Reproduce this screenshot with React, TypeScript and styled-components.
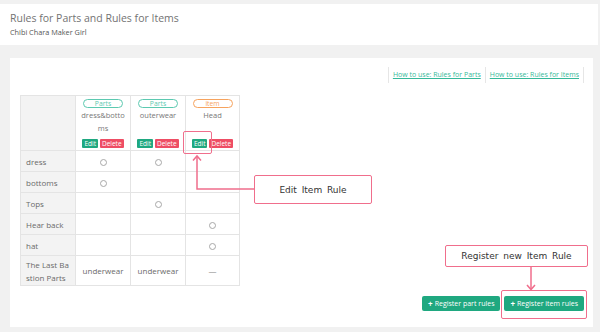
import React from "react";
import styled, { createGlobalStyle } from "styled-components";

const GlobalStyle = createGlobalStyle`
  html, body {
    margin: 0;
    padding: 0;
    background: #f1f1f1;
  }
  body {
    font-family: "Open Sans", "Liberation Sans", sans-serif;
  }
`;

const colors = {
  pink: "#f06e8c",
  green: "#1fa880",
  red: "#ee4d64",
  teal: "#5cc9b0",
  orange: "#f6a35e",
  link: "#36b99a",
  border: "#e4e4e4",
  shade: "#f3f3f3",
  text: "#6a6a6a",
};

type Kind = "Parts" | "Item";

type Column = { kind: Kind; name: string };

const columns: Column[] = [
  { kind: "Parts", name: "dress&bottoms" },
  { kind: "Parts", name: "outerwear" },
  { kind: "Item", name: "Head" },
];

type Cell = "o" | "" | "-" | string;

const rows: { label: string; cells: Cell[]; tall?: boolean }[] = [
  { label: "dress", cells: ["o", "o", ""] },
  { label: "bottoms", cells: ["o", "", ""] },
  { label: "Tops", cells: ["", "o", ""] },
  { label: "Hear back", cells: ["", "", "o"] },
  { label: "hat", cells: ["", "", "o"] },
  { label: "The Last Bastion Parts", cells: ["underwear", "underwear", "-"], tall: true },
];

export default function App() {
  return (
    <Page>
      <GlobalStyle />
      <Header>
        <Title>Rules for Parts and Rules for Items</Title>
        <Subtitle>Chibi Chara Maker Girl</Subtitle>
      </Header>

      <Main>
        <Card>
          <LinkRow>
            <HelpLink href="#">How to use: Rules for Parts</HelpLink>
            <HelpLink href="#">How to use: Rules for Items</HelpLink>
          </LinkRow>

          <RulesTable>
            <colgroup>
              <col style={{ width: 55 }} />
              <col style={{ width: 55 }} />
              <col style={{ width: 55 }} />
              <col style={{ width: 54 }} />
            </colgroup>
            <thead>
              <tr>
                <CornerCell />
                {columns.map((col, i) => (
                  <HeadCell key={i}>
                    <HeadInner>
                      <Badge $kind={col.kind}>{col.kind === "Item" ? "item" : col.kind}</Badge>
                      <ColName>{col.name}</ColName>
                      <ButtonPair>
                        <SmallButton $variant="edit">Edit</SmallButton>
                        <SmallButton $variant="delete">Delete</SmallButton>
                      </ButtonPair>
                    </HeadInner>
                  </HeadCell>
                ))}
              </tr>
            </thead>
            <tbody>
              {rows.map((row) => (
                <BodyRow key={row.label} $tall={row.tall}>
                  <LabelCell>{row.label}</LabelCell>
                  {row.cells.map((c, i) => (
                    <ValueCell key={i}>
                      {c === "o" ? <Mark /> : c === "-" ? <Dash>—</Dash> : c}
                    </ValueCell>
                  ))}
                </BodyRow>
              ))}
            </tbody>
          </RulesTable>

          <ActionRow>
            <RegisterButton>
              <Plus>+</Plus>Register part rules
            </RegisterButton>
            <RegisterButton>
              <Plus>+</Plus>Register item rules
            </RegisterButton>
          </ActionRow>
        </Card>
      </Main>

      <Highlight style={{ left: 183, top: 131, width: 29, height: 23 }} />
      <Highlight style={{ left: 501, top: 290, width: 86, height: 29 }} />
      <Connectors width={600} height={332}>
        <path d="M197 156 V189 H254" />
        <path d="M193 160.5 L197 156 L201 160.5" />
        <path d="M531 267 V289" />
        <path d="M527 285 L531 289.5 L535 285" />
      </Connectors>
      <Callout style={{ left: 254, top: 175, width: 118, height: 29 }}>Edit Item Rule</Callout>
      <Callout style={{ left: 445, top: 245, width: 143, height: 22 }}>Register new Item Rule</Callout>
    </Page>
  );
}

const Page = styled.div`
  position: relative;
  width: 600px;
  height: 332px;
  overflow: hidden;
  padding-top: 4px;
  box-sizing: border-box;
`;

const Header = styled.header`
  width: 598px;
  height: 41px;
  box-sizing: border-box;
  padding: 7px 10px 0;
  background: #fff;
  display: flex;
  flex-direction: column;
`;

const Title = styled.h1`
  margin: 0;
  font-size: 10.5px;
  line-height: 14px;
  font-weight: 400;
  color: #737373;
`;

const Subtitle = styled.div`
  margin-top: 2px;
  font-size: 7.3px;
  line-height: 10px;
  color: #555;
`;

const Main = styled.main`
  padding: 13px 7px 0 10px;
`;

const Card = styled.section`
  width: 583px;
  height: 269px;
  box-sizing: border-box;
  background: #fff;
  padding: 9px 9px 16px 10px;
  display: flex;
  flex-direction: column;
`;

const LinkRow = styled.nav`
  display: flex;
  justify-content: flex-end;
`;

const HelpLink = styled.a`
  height: 16px;
  line-height: 16px;
  padding: 0 4px;
  font-size: 7px;
  color: ${colors.link};
  text-decoration: underline;
  border-left: 1px solid #e6e6e6;

  &:last-child {
    border-right: 1px solid #e6e6e6;
  }
`;

const RulesTable = styled.table`
  margin-top: 12px;
  width: 219px;
  table-layout: fixed;
  border-collapse: collapse;
  font-size: 7.5px;
  color: ${colors.text};

  th, td {
    box-sizing: border-box;
  }
`;

const CornerCell = styled.th`
  background: ${colors.shade};
  border: 1px solid ${colors.border};
`;

const HeadCell = styled.th`
  padding: 3px 2px 2px;
  border: 1px solid ${colors.border};
  font-weight: 400;
  vertical-align: top;
`;

const HeadInner = styled.div`
  height: 49px;
  display: flex;
  flex-direction: column;
  align-items: center;
`;

const Badge = styled.span<{ $kind: Kind }>`
  width: 40px;
  height: 9px;
  box-sizing: border-box;
  border: 1px solid ${({ $kind }) => ($kind === "Parts" ? colors.teal : colors.orange)};
  color: ${({ $kind }) => ($kind === "Parts" ? colors.teal : colors.orange)};
  border-radius: 5px;
  font-size: 6.8px;
  line-height: 7px;
  text-align: center;
`;

const ColName = styled.div`
  margin-top: 1px;
  width: 100%;
  padding: 0 2px;
  box-sizing: border-box;
  font-size: 7.5px;
  line-height: 13px;
  text-align: center;
  word-break: break-all;
  color: #777;
`;

const ButtonPair = styled.div`
  margin-top: auto;
  display: flex;
  gap: 2px;
`;

const SmallButton = styled.span<{ $variant: "edit" | "delete" }>`
  height: 9px;
  padding: 0 2px;
  line-height: 9px;
  font-size: 6.5px;
  color: #fff;
  border-radius: 1px;
  background: ${({ $variant }) => ($variant === "edit" ? colors.green : colors.red)};
`;

const BodyRow = styled.tr<{ $tall?: boolean }>`
  height: ${({ $tall }) => ($tall ? "30px" : "21px")};
`;

const LabelCell = styled.td`
  padding: 0 5px 0 5px;
  background: ${colors.shade};
  border: 1px solid ${colors.border};
  font-size: 8px;
  line-height: 13px;
  word-break: break-all;
`;

const ValueCell = styled.td`
  padding: 0 3px;
  border: 1px solid ${colors.border};
  font-size: 8px;
  text-align: center;
  vertical-align: middle;
`;

const Mark = styled.span`
  display: inline-block;
  width: 7px;
  height: 7px;
  box-sizing: border-box;
  border: 1px solid #a8a8a8;
  border-radius: 50%;
  vertical-align: middle;
`;

const Dash = styled.span`
  color: #888;
`;

const ActionRow = styled.div`
  margin-top: auto;
  display: flex;
  justify-content: flex-end;
  gap: 4px;
`;

const RegisterButton = styled.button`
  height: 15px;
  padding: 0 6px;
  border: none;
  border-radius: 2px;
  background: ${colors.green};
  color: #fff;
  font-family: "Open Sans", "Liberation Sans", sans-serif;
  font-size: 7px;
  display: flex;
  align-items: center;
  gap: 2px;
`;

const Plus = styled.span`
  font-weight: 700;
  font-size: 8px;
`;

const Highlight = styled.div`
  position: absolute;
  box-sizing: border-box;
  border: 1.5px solid ${colors.pink};
  border-radius: 2px;
`;

const Callout = styled.div`
  position: absolute;
  box-sizing: border-box;
  border: 1.5px solid ${colors.pink};
  border-radius: 2px;
  background: #fff;
  display: flex;
  align-items: center;
  justify-content: center;
  font-family: "DejaVu Sans", sans-serif;
  font-size: 9px;
  word-spacing: 2px;
  color: #333;
`;

const Connectors = styled.svg`
  position: absolute;
  left: 0;
  top: 0;
  pointer-events: none;
  fill: none;
  stroke: ${colors.pink};
  stroke-width: 1.5;
`;
